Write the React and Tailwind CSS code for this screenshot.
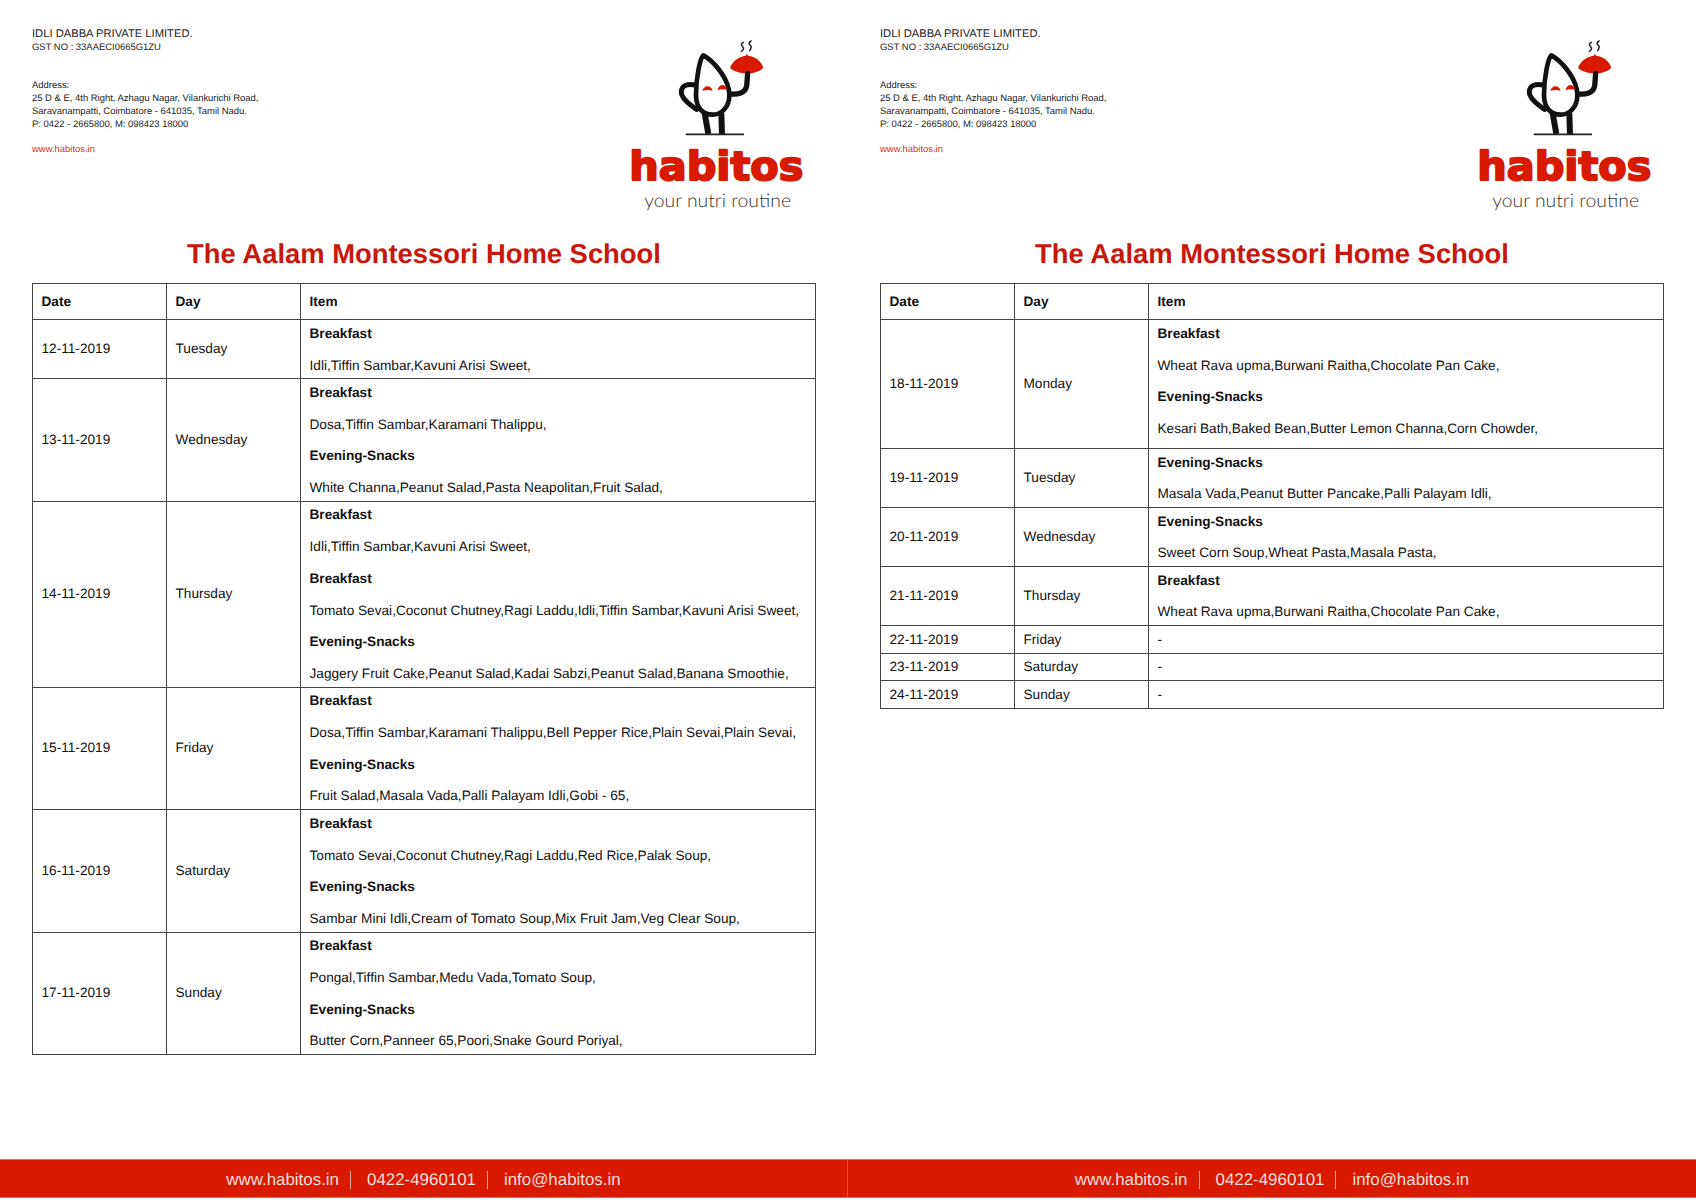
const page1 = [
  { date: '12-11-2019', day: 'Tuesday', items: [['Breakfast', 'Idli,Tiffin Sambar,Kavuni Arisi Sweet,']] },
  { date: '13-11-2019', day: 'Wednesday', items: [['Breakfast', 'Dosa,Tiffin Sambar,Karamani Thalippu,'], ['Evening-Snacks', 'White Channa,Peanut Salad,Pasta Neapolitan,Fruit Salad,']] },
  { date: '14-11-2019', day: 'Thursday', items: [['Breakfast', 'Idli,Tiffin Sambar,Kavuni Arisi Sweet,'], ['Breakfast', 'Tomato Sevai,Coconut Chutney,Ragi Laddu,Idli,Tiffin Sambar,Kavuni Arisi Sweet,'], ['Evening-Snacks', 'Jaggery Fruit Cake,Peanut Salad,Kadai Sabzi,Peanut Salad,Banana Smoothie,']] },
  { date: '15-11-2019', day: 'Friday', items: [['Breakfast', 'Dosa,Tiffin Sambar,Karamani Thalippu,Bell Pepper Rice,Plain Sevai,Plain Sevai,'], ['Evening-Snacks', 'Fruit Salad,Masala Vada,Palli Palayam Idli,Gobi - 65,']] },
  { date: '16-11-2019', day: 'Saturday', items: [['Breakfast', 'Tomato Sevai,Coconut Chutney,Ragi Laddu,Red Rice,Palak Soup,'], ['Evening-Snacks', 'Sambar Mini Idli,Cream of Tomato Soup,Mix Fruit Jam,Veg Clear Soup,']] },
  { date: '17-11-2019', day: 'Sunday', items: [['Breakfast', 'Pongal,Tiffin Sambar,Medu Vada,Tomato Soup,'], ['Evening-Snacks', 'Butter Corn,Panneer 65,Poori,Snake Gourd Poriyal,']] },
];

const page2 = [
  { date: '18-11-2019', day: 'Monday', tall: true, items: [['Breakfast', 'Wheat Rava upma,Burwani Raitha,Chocolate Pan Cake,'], ['Evening-Snacks', 'Kesari Bath,Baked Bean,Butter Lemon Channa,Corn Chowder,']] },
  { date: '19-11-2019', day: 'Tuesday', items: [['Evening-Snacks', 'Masala Vada,Peanut Butter Pancake,Palli Palayam Idli,']] },
  { date: '20-11-2019', day: 'Wednesday', items: [['Evening-Snacks', 'Sweet Corn Soup,Wheat Pasta,Masala Pasta,']] },
  { date: '21-11-2019', day: 'Thursday', items: [['Breakfast', 'Wheat Rava upma,Burwani Raitha,Chocolate Pan Cake,']] },
  { date: '22-11-2019', day: 'Friday', items: [] },
  { date: '23-11-2019', day: 'Saturday', items: [] },
  { date: '24-11-2019', day: 'Sunday', items: [] },
];

const Logo = () => (
  <svg viewBox="0 0 600 570" className="w-[200px] h-[190px] shrink-0">
    {/* steam */}
    <path d="M370 37c-8 5-7 9-2 13s3 9-4 14M393 33c-8 5-7 9-2 13s3 9-2 16" fill="none" stroke="#222" strokeWidth="4.5" strokeLinecap="round" />
    {/* dish */}
    <circle cx="381" cy="76" r="3" fill="#d71a00" />
    <path d="M330 113C338 92 358 77 381 77s42 15 49 36c-8 10-27 17-49 17s-43-7-51-17z" fill="#d71a00" />
    {/* arms */}
    <path d="M332 192c20 2 44-2 48-24l3-38" fill="none" stroke="#111" strokeWidth="16" strokeLinecap="round" />
    <path d="M226 165C205 160 184 165 184 186 184 205 210 225 230 238" fill="none" stroke="#111" strokeWidth="15" strokeLinecap="round" />
    {/* legs */}
    <path d="M254 250l11 62M304 250l2 62" fill="none" stroke="#111" strokeWidth="18" />
    {/* body */}
    <path d="M250 76C240 84 228 145 228 195 228 235 250 254 277 254 306 254 328 230 328 195 328 150 285 95 250 76z" fill="#fff" stroke="#111" strokeWidth="14" strokeLinejoin="round" />
    <path d="M197 313h175" stroke="#222" strokeWidth="5" />
    {/* eyes */}
    <path d="M247 182c4-18 27-18 31 0-10-3-21-3-31 0zM293 180c4-20 25-20 29 0-10-3-19-3-29 0z" fill="#d71a00" />
    <text x="28" y="450" textLength="522" lengthAdjust="spacingAndGlyphs" fill="#d71a00" stroke="#d71a00" strokeWidth="6" strokeLinejoin="round" className="font-['DejaVu_Sans'] font-bold text-[120px]">habitos</text>
    <text x="73" y="532" textLength="440" lengthAdjust="spacingAndGlyphs" fill="#333" className="font-['Lato'] font-light text-[56px]">your nutri routine</text>
  </svg>
);

const Page = ({ rows }) => (
  <div className="px-8 pt-6 min-w-0">
    <div className="flex justify-between h-[190px] -mr-[4px] pt-0">
      <div className="text-[9.45px] leading-[13px] text-[#222]">
        <p className="text-[11.2px] leading-[14px] pt-[3px]">IDLI DABBA PRIVATE LIMITED.</p>
        <p>GST NO : 33AAECI0665G1ZU</p>
        <p className="mt-[25px]">Address:</p>
        <p>25 D &amp; E, 4th Right, Azhagu Nagar, Vilankurichi Road,</p>
        <p>Saravanampatti, Coimbatore - 641035, Tamil Nadu.</p>
        <p>P: 0422 - 2665800, M: 098423 18000</p>
        <p className="mt-[12px] text-[#e8281a]">www.habitos.in</p>
      </div>
      <div className="mt-[6px]">
        <Logo />
      </div>
    </div>
    <h1 className="mt-[23px] text-center text-[27.4px] leading-[34px] font-bold text-[#c8170c]">The Aalam Montessori Home School</h1>
    <table className="mt-[12px] w-full table-fixed border-collapse text-[13.65px] leading-[15.7px] text-[#111]">
      <colgroup>
        <col className="w-[134px]" />
        <col className="w-[134px]" />
        <col />
      </colgroup>
      <thead>
        <tr className="text-left h-[36px]">
          <th className="border border-[#444] pl-[8.5px] font-bold">Date</th>
          <th className="border border-[#444] pl-[8.5px] font-bold">Day</th>
          <th className="border border-[#444] pl-[8.5px] font-bold">Item</th>
        </tr>
      </thead>
      <tbody>
        {rows.map((row) => (
          <tr key={row.date}>
            <td className="border border-[#444] pl-[8.5px]">{row.date}</td>
            <td className="border border-[#444] pl-[8.5px]">{row.day}</td>
            <td className="border border-[#444] pl-[8.5px]">
              {row.items.length === 0 ? (
                <p className="py-[5.5px]">-</p>
              ) : (
                <div className={`flex flex-col gap-[16px] pt-[5.8px] ${row.tall ? 'pb-[11.2px]' : 'pb-[4.9px]'}`}>
                  {row.items.flat().map((line, i) => (
                    <p key={i} className={i % 2 === 0 ? 'font-bold' : ''}>{line}</p>
                  ))}
                </div>
              )}
            </td>
          </tr>
        ))}
      </tbody>
    </table>
  </div>
);

const FooterCell = () => (
  <div className="flex items-center justify-center text-[16.9px] text-[#f8ddd8] pt-[2px] border-r border-[#e2503f] last:border-r-0">
    <span>www.habitos.in</span>
    <span className="h-[18px] w-px bg-[#f0a79d] ml-[11px] mr-[16px]" />
    <span>0422-4960101</span>
    <span className="h-[18px] w-px bg-[#f0a79d] ml-[11px] mr-[16px]" />
    <span>info@habitos.in</span>
  </div>
);

export default function App() {
  return (
    <div className="h-[1200px] w-[1696px] bg-white font-['Liberation_Sans',Arial,sans-serif] [text-rendering:geometricPrecision] flex flex-col overflow-hidden">
      <div className="grid grid-cols-2 flex-1 min-h-0">
        <Page rows={page1} />
        <Page rows={page2} />
      </div>
      <div className="grid grid-cols-2 h-[39px] mb-[2px] bg-[#d71a00] border-y border-[#e66a5a]">
        <FooterCell />
        <FooterCell />
      </div>
    </div>
  );
}
